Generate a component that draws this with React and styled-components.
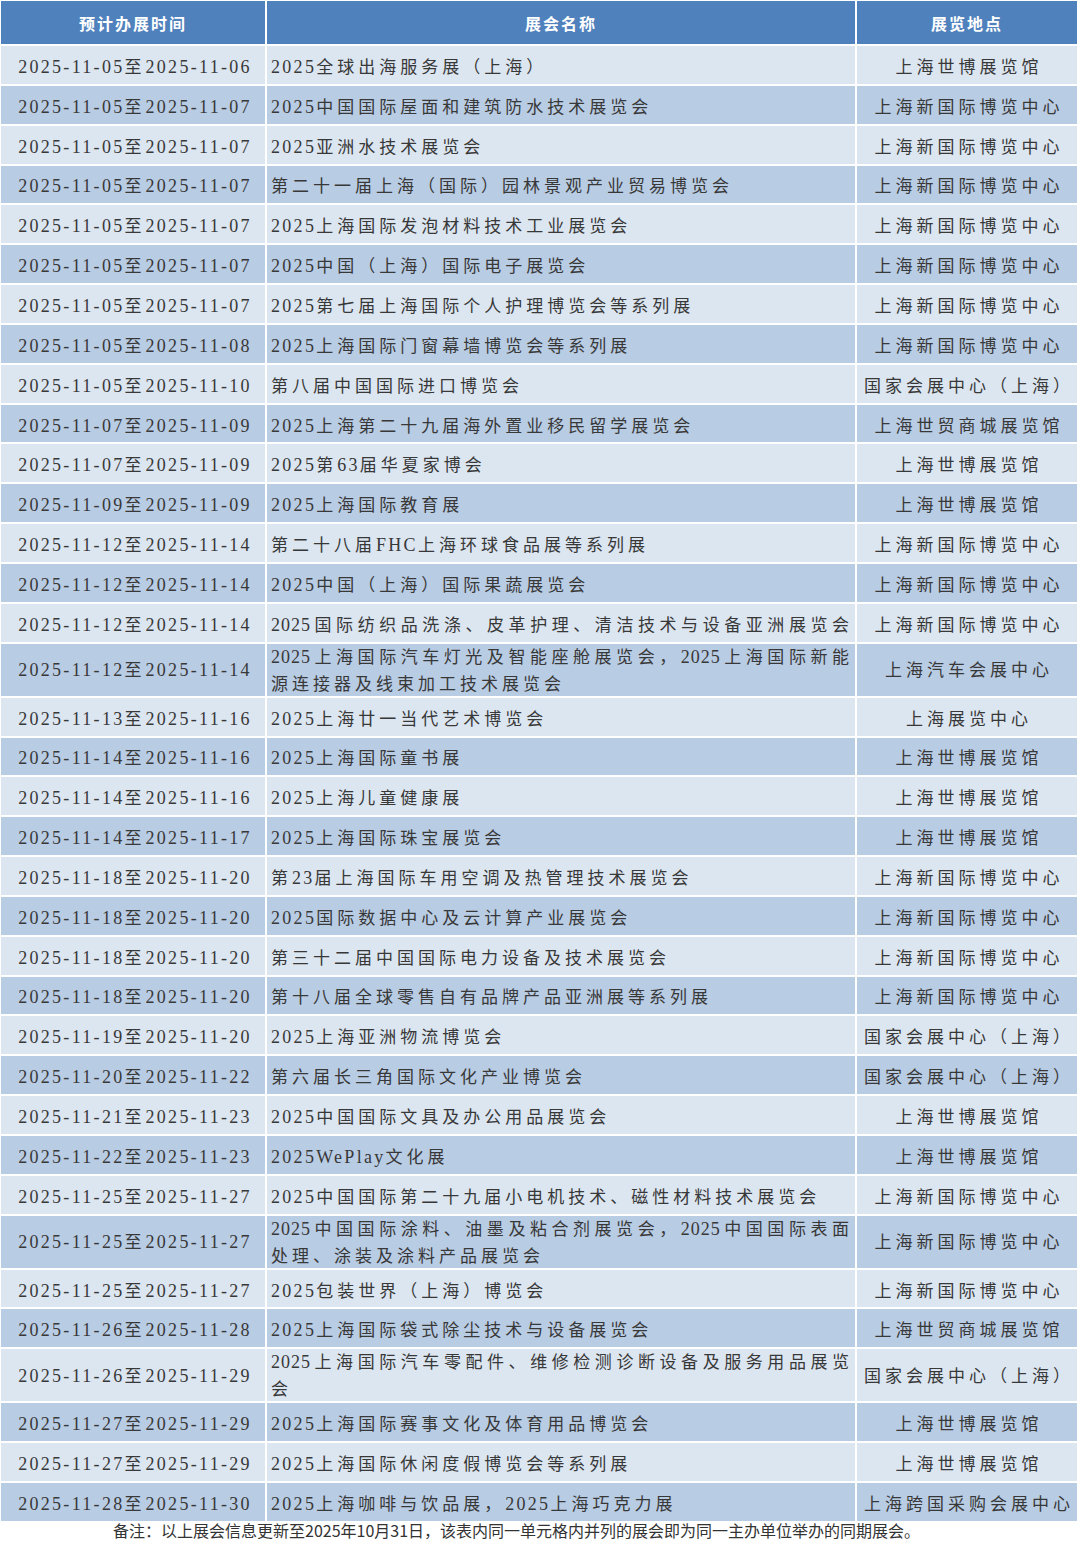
import React from 'react';
import styled, { createGlobalStyle } from 'styled-components';

const GlobalStyle = createGlobalStyle`
  html, body {
    margin: 0;
    padding: 0;
    background: #ffffff;
  }
`;

const Page = styled.div`
  width: 1080px;
  height: 1541px;
  box-sizing: border-box;
  padding: 1px 0 0 1px;
  background: #ffffff;
  overflow: hidden;
`;

const Table = styled.div`
  display: flex;
  flex-direction: column;
  gap: 2px;
  width: 1076px;
`;

const Row = styled.div`
  display: grid;
  grid-template-columns: 264px 588px 220px;
  column-gap: 2px;
  height: ${(p) => p.$h}px;
`;

const HeadCell = styled.div`
  display: flex;
  align-items: center;
  justify-content: center;
  background: #4f81bd;
  color: #ffffff;
  font-family: "Noto Sans CJK SC", sans-serif;
  font-weight: 700;
  font-size: 16px;
  letter-spacing: 2px;
`;

const Cell = styled.div`
  display: flex;
  flex-direction: column;
  justify-content: center;
  align-items: ${(p) => (p.$left ? 'stretch' : 'center')};
  padding: ${(p) => (p.$left ? '0 5px 0 4px' : '0 0 0 4px')};
  padding-top: ${(p) => (p.$tall ? '2px' : '5px')};
  background: ${(p) => (p.$dark ? '#b8cce4' : '#dce6f1')};
  color: #383838;
  font-family: "Liberation Serif", "Noto Sans CJK SC", serif;
  font-size: 17px;
  line-height: 27px;
  letter-spacing: 4px;
  white-space: nowrap;
  overflow: hidden;
`;

const Line = styled.span`
  display: block;
  letter-spacing: ${(p) => (p.$fill ? '1px' : '4px')};
  text-align: ${(p) => (p.$fill ? 'justify' : 'left')};
  text-align-last: ${(p) => (p.$fill ? 'justify' : 'auto')};
`;

const Latin = styled.span`
  font-size: 18px;
  letter-spacing: ${(p) => (p.$fill ? '1px' : '2.3px')};
`;

const Note = styled.div`
  padding: 0 0 0 112px;
  margin-top: -1px;
  font-family: "Noto Sans CJK SC", sans-serif;
  font-size: 16px;
  line-height: 20px;
  color: #333333;
`;

// split a string into latin and CJK runs so digits get their own spacing
const Mixed = ({ text, fill }) =>
  text.split(/([\x00-\x7F]+)/).map((part, i) =>
    i % 2 === 1 ? (
      <Latin key={i} $fill={fill}>
        {part}
      </Latin>
    ) : (
      part
    )
  );

const exhibitions = [
  ['2025-11-05至2025-11-06', '2025全球出海服务展（上海）', '上海世博展览馆'],
  ['2025-11-05至2025-11-07', '2025中国国际屋面和建筑防水技术展览会', '上海新国际博览中心'],
  ['2025-11-05至2025-11-07', '2025亚洲水技术展览会', '上海新国际博览中心'],
  ['2025-11-05至2025-11-07', '第二十一届上海（国际）园林景观产业贸易博览会', '上海新国际博览中心'],
  ['2025-11-05至2025-11-07', '2025上海国际发泡材料技术工业展览会', '上海新国际博览中心'],
  ['2025-11-05至2025-11-07', '2025中国（上海）国际电子展览会', '上海新国际博览中心'],
  ['2025-11-05至2025-11-07', '2025第七届上海国际个人护理博览会等系列展', '上海新国际博览中心'],
  ['2025-11-05至2025-11-08', '2025上海国际门窗幕墙博览会等系列展', '上海新国际博览中心'],
  ['2025-11-05至2025-11-10', '第八届中国国际进口博览会', '国家会展中心（上海）'],
  ['2025-11-07至2025-11-09', '2025上海第二十九届海外置业移民留学展览会', '上海世贸商城展览馆'],
  ['2025-11-07至2025-11-09', '2025第63届华夏家博会', '上海世博展览馆'],
  ['2025-11-09至2025-11-09', '2025上海国际教育展', '上海世博展览馆'],
  ['2025-11-12至2025-11-14', '第二十八届FHC上海环球食品展等系列展', '上海新国际博览中心'],
  ['2025-11-12至2025-11-14', '2025中国（上海）国际果蔬展览会', '上海新国际博览中心'],
  ['2025-11-12至2025-11-14', ['2025国际纺织品洗涤、皮革护理、清洁技术与设备亚洲展览会', ''], '上海新国际博览中心'],
  ['2025-11-12至2025-11-14', ['2025上海国际汽车灯光及智能座舱展览会，2025上海国际新能', '源连接器及线束加工技术展览会'], '上海汽车会展中心'],
  ['2025-11-13至2025-11-16', '2025上海廿一当代艺术博览会', '上海展览中心'],
  ['2025-11-14至2025-11-16', '2025上海国际童书展', '上海世博展览馆'],
  ['2025-11-14至2025-11-16', '2025上海儿童健康展', '上海世博展览馆'],
  ['2025-11-14至2025-11-17', '2025上海国际珠宝展览会', '上海世博展览馆'],
  ['2025-11-18至2025-11-20', '第23届上海国际车用空调及热管理技术展览会', '上海新国际博览中心'],
  ['2025-11-18至2025-11-20', '2025国际数据中心及云计算产业展览会', '上海新国际博览中心'],
  ['2025-11-18至2025-11-20', '第三十二届中国国际电力设备及技术展览会', '上海新国际博览中心'],
  ['2025-11-18至2025-11-20', '第十八届全球零售自有品牌产品亚洲展等系列展', '上海新国际博览中心'],
  ['2025-11-19至2025-11-20', '2025上海亚洲物流博览会', '国家会展中心（上海）'],
  ['2025-11-20至2025-11-22', '第六届长三角国际文化产业博览会', '国家会展中心（上海）'],
  ['2025-11-21至2025-11-23', '2025中国国际文具及办公用品展览会', '上海世博展览馆'],
  ['2025-11-22至2025-11-23', '2025WePlay文化展', '上海世博展览馆'],
  ['2025-11-25至2025-11-27', '2025中国国际第二十九届小电机技术、磁性材料技术展览会', '上海新国际博览中心'],
  ['2025-11-25至2025-11-27', ['2025中国国际涂料、油墨及粘合剂展览会，2025中国国际表面', '处理、涂装及涂料产品展览会'], '上海新国际博览中心'],
  ['2025-11-25至2025-11-27', '2025包装世界（上海）博览会', '上海新国际博览中心'],
  ['2025-11-26至2025-11-28', '2025上海国际袋式除尘技术与设备展览会', '上海世贸商城展览馆'],
  ['2025-11-26至2025-11-29', ['2025上海国际汽车零配件、维修检测诊断设备及服务用品展览', '会'], '国家会展中心（上海）'],
  ['2025-11-27至2025-11-29', '2025上海国际赛事文化及体育用品博览会', '上海世博展览馆'],
  ['2025-11-27至2025-11-29', '2025上海国际休闲度假博览会等系列展', '上海世博展览馆'],
  ['2025-11-28至2025-11-30', '2025上海咖啡与饮品展，2025上海巧克力展', '上海跨国采购会展中心'],
];

const NameCell = ({ name, dark, tall }) => {
  const lines = Array.isArray(name) ? name.filter((l) => l !== '') : [name];
  const forced = Array.isArray(name);
  return (
    <Cell $left $dark={dark} $tall={tall}>
      {lines.map((line, i) => {
        const fill = forced && (i < lines.length - 1 || lines.length === 1);
        return (
          <Line key={i} $fill={fill}>
            <Mixed text={line} fill={fill} />
          </Line>
        );
      })}
    </Cell>
  );
};

const App = () => (
  <Page>
    <GlobalStyle />
    <Table>
      <Row $h={43}>
        <HeadCell>预计办展时间</HeadCell>
        <HeadCell>展会名称</HeadCell>
        <HeadCell>展览地点</HeadCell>
      </Row>
      {exhibitions.map(([date, name, place], i) => {
        const dark = i % 2 === 1;
        const tall = Array.isArray(name) && name[1] !== '';
        return (
          <Row key={i} $h={tall ? 52 : 37.85}>
            <Cell $dark={dark} $tall={tall}>
              <Line>
                <Mixed text={date} />
              </Line>
            </Cell>
            <NameCell name={name} dark={dark} tall={tall} />
            <Cell $dark={dark} $tall={tall}>
              <Line>
                <Mixed text={place} />
              </Line>
            </Cell>
          </Row>
        );
      })}
    </Table>
    <Note>备注：以上展会信息更新至2025年10月31日，该表内同一单元格内并列的展会即为同一主办单位举办的同期展会。</Note>
  </Page>
);

export default App;
